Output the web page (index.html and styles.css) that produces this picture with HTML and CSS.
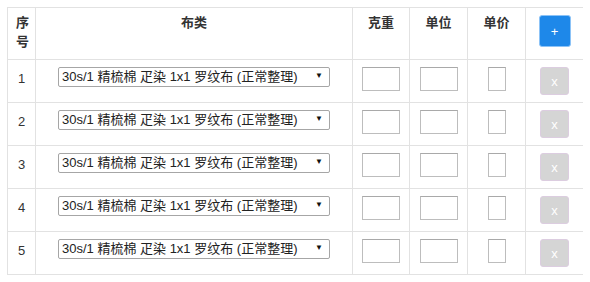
FILE: index.html
```html
<!DOCTYPE html>
<html lang="zh-CN">
<head>
  <meta charset="UTF-8" />
  <title>布类明细</title>
  <link rel="stylesheet" href="styles.css">
</head>
<body>
  <table class="fabric-table">
    <thead>
      <tr>
        <th class="c-no">序号</th>
        <th class="c-cloth">布类</th>
        <th class="c-weight">克重</th>
        <th class="c-num">单位</th>
        <th class="c-num">单价</th>
        <th class="c-num"><button class="add-btn">+</button></th>
      </tr>
    </thead>
    <tbody id="rows"></tbody>
  </table>

  <script>
    const rows = document.getElementById('rows');
    const cloth = '30s/1 精梳棉 疋染 1x1 罗纹布 (正常整理)';

    for (let i = 1; i <= 5; i++) {
      const tr = document.createElement('tr');
      tr.innerHTML = `
        <td class="no">${i}</td>
        <td><div class="select-wrap"><select class="cloth-select"><option>${cloth}</option></select></div></td>
        <td><input type="text" class="field"></td>
        <td><input type="text" class="field"></td>
        <td><input type="text" class="field small"></td>
        <td><button class="del-btn">x</button></td>`;
      rows.appendChild(tr);
    }
  </script>
</body>
</html>
```

FILE: styles.css
```css
body {
  margin: 7px;
  font-family: "Liberation Sans", "Noto Sans CJK SC", sans-serif;
  font-size: 13px;
  color: #333;
  background: #fff;
}
.fabric-table {
  border-collapse: separate;
  border-spacing: 0;
  table-layout: fixed;
  width: 577px;
  border-top: 1px solid #e2e2e2;
  border-left: 1px solid #e2e2e2;
}
.fabric-table th,
.fabric-table td {
  box-sizing: border-box;
  border-right: 1px solid #e2e2e2;
  border-bottom: 1px solid #e2e2e2;
  text-align: center;
  vertical-align: top;
  padding: 0;
}
.c-no { width: 28px; }
.c-cloth { width: 317px; }
.c-weight { width: 57px; }
.c-num { width: 58px; }
.fabric-table th {
  font-weight: bold;
  line-height: 19px;
  height: 52px;
  padding: 5px 8px 7px;
}
.fabric-table td {
  height: 43px;
  padding: 7px 4px 7px;
}
.fabric-table td.no {
  padding-top: 9px;
  line-height: 20px;
}
.select-wrap {
  position: relative;
  width: 272px;
  margin: 0 auto;
}
.cloth-select {
  appearance: none;
  -webkit-appearance: none;
  display: block;
  width: 272px;
  height: 20px;
  margin: 0;
  padding: 0 16px 0 3px;
  border: 1px solid #a6a6a6;
  border-radius: 2px;
  background: #fff;
  font-family: inherit;
  font-size: 13px;
  color: #222;
  line-height: 18px;
}
.select-wrap::after {
  content: "▼";
  position: absolute;
  right: 7px;
  top: 4px;
  font-size: 8px;
  line-height: 10px;
  color: #111;
  pointer-events: none;
}
.field {
  display: block;
  box-sizing: border-box;
  width: 38px;
  height: 24px;
  margin: 0 auto;
  padding: 0 2px;
  border: 1px solid #bdbdbd;
  border-top-color: #a9a9a9;
  background: #fff;
}
.field.small {
  width: 18px;
}
.add-btn {
  box-sizing: border-box;
  width: 32px;
  height: 32px;
  margin-top: 2px;
  border: 1px solid #8cc3f7;
  border-radius: 3px;
  background: #1e88e9;
  color: #fff;
  font-family: inherit;
  font-size: 13px;
  cursor: pointer;
}
.del-btn {
  display: block;
  box-sizing: border-box;
  width: 29px;
  height: 28px;
  margin: 0 auto;
  border: 1px solid #dccde0;
  border-radius: 3px;
  background: #d5d5d5;
  color: #fff;
  font-family: inherit;
  font-size: 13px;
}
```
